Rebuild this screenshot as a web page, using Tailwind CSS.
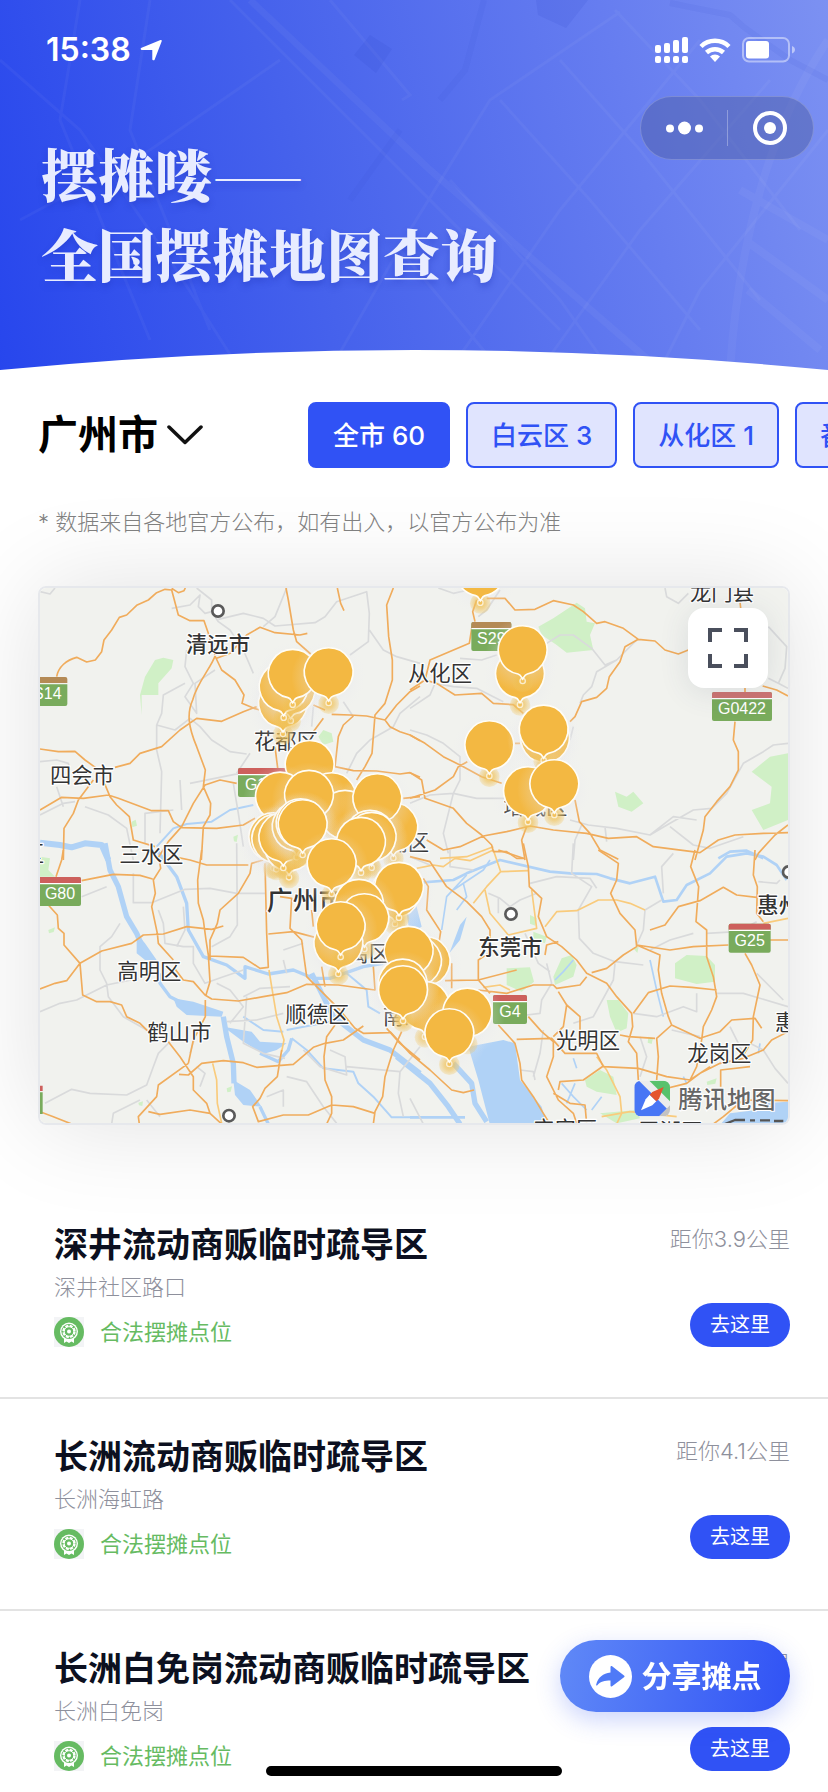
<!DOCTYPE html>
<html lang="zh-CN">
<head>
    <meta charset="UTF-8">
    <meta name="viewport" content="width=device-width, initial-scale=1.0">
    <script src="https://cdn.jsdelivr.net/npm/@tailwindcss/browser@4"></script>
    <title>全国摆摊地图查询</title>
</head>
<body class="bg-white text-[#0c1020] overflow-x-hidden [font-family:Inter,'Noto_Sans_CJK_SC',sans-serif]">

    <!-- shared icons -->
    <svg class="hidden">
        <symbol id="badge" viewBox="0 0 30 30">
            <rect width="30" height="30" fill="#f3f4f6"/>
            <circle cx="15" cy="15" r="15" fill="#66bb62"/>
            <path d="M10 20v6l2.500-1.500L15 26l2.500-1.500L20 26v-6" fill="#fff"/>
            <circle cx="15" cy="14.500" r="9" fill="#fff"/>
            <circle cx="15" cy="14.500" r="7.600" fill="#66bb62"/>
            <circle cx="15" cy="14.500" r="5.600" fill="none" stroke="#fff" stroke-width="2.200" stroke-dasharray="3 1.400"/>
            <circle cx="15" cy="14.500" r="4.800" fill="none" stroke="#fff" stroke-width="1"/>
            <circle cx="15" cy="14.500" r="2" fill="#fff"/>
        </symbol>
    </svg>

    <header class="relative bg-linear-[76deg,#2746ed_0%,#4662ec_38%,#667df0_75%,#7c91f2_100%] text-white">
        <!-- faint street grid -->
        <svg class="absolute inset-0 w-full h-full" viewBox="0 0 828 370" preserveAspectRatio="xMidYMid slice" fill="none" stroke="#fff" stroke-opacity=".04" stroke-width="3" aria-hidden="true">
            <path d="M230 0L340 110 560 330M330 0L410 95 402 100M620 12L490 100 410 230 330 370M700 40L560 210 450 370M770 80L640 230 540 370M828 130L700 290 660 370M615 10L700 100 800 230M560 60L640 150 760 300M500 100L590 200 700 330M450 180L560 300 610 370M400 250L500 370M0 60L80 130 170 260 240 370M80 0L60 120 150 340M150 0L130 130 210 330M20 220L150 150 280 60"/>
            <path d="M828 40C780 110 740 220 730 370M828 240L740 190M828 300L745 240M820 350L748 290" stroke-width="8"/>
            <path d="M250 0L430 170 660 370" stroke-width="7"/>
            <g fill="#2d48c8" fill-opacity=".13" stroke="none">
                <path d="M536 0h52l-22 28-28-13zM370 35l22 14-16 24-22-18z"/>
            </g>
            <path d="M670 3L730 15 745 28 790 60 828 80M484 0L465 70 440 100M400 130L350 200" stroke="#2d48c8" stroke-opacity=".08" stroke-width="6"/>
        </svg>

        <div class="relative h-24 pt-1 pl-[46px] pr-[33px] flex items-center justify-between">
            <div class="flex items-center gap-2">
                <span class="text-[32px] font-semibold leading-10">15:38</span>
                <svg class="w-6 h-6" viewBox="0 0 24 24" fill="#fff"><path d="M21.500 2c.8-.4 1.600.4 1.200 1.200l-7.100 18.500c-.4 1-2.300.8-2.300-.4V12H3c-1.600 0-1.900-1.700-.4-2.300z"/></svg>
            </div>
            <div class="flex items-center gap-2.5">
                <svg class="w-[36px] h-[28px]" viewBox="0 0 36 28" fill="#fff">
                    <rect x="2" y="9" width="6" height="8" rx="2"/><rect x="11" y="7" width="6" height="10" rx="2"/><rect x="20" y="4" width="6" height="13" rx="2"/><rect x="29" y="1" width="6" height="16" rx="2"/>
                    <rect x="2" y="20" width="6" height="7" rx="2"/><rect x="11" y="20" width="6" height="7" rx="2"/><rect x="20" y="20" width="6" height="7" rx="2"/><rect x="29" y="20" width="6" height="7" rx="2"/>
                </svg>
                <svg class="w-8 h-6" viewBox="0 0 32 24" fill="none" stroke="#fff">
                    <path d="M2 8.500a20 20 0 0 1 28 0" stroke-width="4.500"/>
                    <path d="M7.500 14.500a12.500 12.500 0 0 1 17 0" stroke-width="4.500"/>
                    <path d="M16 24l-5-5.500a7.500 7.500 0 0 1 10 0z" fill="#fff" stroke="none"/>
                </svg>
                <svg class="w-[54px] h-[26px]" viewBox="0 0 54 26">
                    <rect x="2" y="1" width="46" height="23.500" rx="6" fill="none" stroke="#fff" stroke-opacity=".45" stroke-width="2"/>
                    <rect x="5" y="4" width="23" height="17.500" rx="3" fill="#fff"/>
                    <path d="M51 9c4 1.500 4 6 0 7.500z" fill="#fff" fill-opacity=".5"/>
                </svg>
            </div>
        </div>

        <div class="absolute top-24 right-[14px] w-[174px] h-16 rounded-full bg-[#4c5aa0]/45 border border-white/20 flex items-center">
            <button type="button" aria-label="更多" class="flex-1 flex justify-center">
                <svg class="w-10 h-4" viewBox="0 0 40 16" fill="#fff"><circle cx="6" cy="8.500" r="4"/><circle cx="20.500" cy="8" r="6.500"/><circle cx="35" cy="8.500" r="4"/></svg>
            </button>
            <span class="w-px h-9 bg-white/30"></span>
            <button type="button" aria-label="关闭" class="flex-1 flex justify-center">
                <svg class="w-[34px] h-[34px]" viewBox="0 0 34 34"><circle cx="17" cy="17" r="15" fill="none" stroke="#fff" stroke-width="4"/><circle cx="17" cy="17" r="6" fill="#fff"/></svg>
            </button>
        </div>

        <h1 class="relative pt-9 pb-[58px] pl-[41px] text-[57px] leading-[80px] font-black text-[#e8ecff] text-shadow-[0_4px_6px_rgb(30_50_180_/_0.35)] [font-family:'Noto_Serif_CJK_SC','Noto_Sans_CJK_SC',serif]">
            摆摊喽<span class="text-[46px] leading-none font-medium [font-family:'Noto_Sans_CJK_SC',sans-serif]">——</span><br>全国摆摊地图查询
        </h1>
        <svg class="relative block w-full h-5" viewBox="0 0 828 20" preserveAspectRatio="none"><path d="M0 20Q414-20 828 20v1H0z" fill="#fff"/></svg>
    </header>

    <main>
        <div class="flex pt-8">
            <div class="relative w-[308px] shrink-0 pl-[38px] flex items-center">
                <label for="city" class="sr-only">城市</label>
                <select id="city" name="city" class="appearance-none w-40 h-[66px] bg-transparent text-[40px] font-bold text-black">
                    <option>广州市</option>
                    <option>深圳市</option>
                    <option>佛山市</option>
                </select>
                <svg class="absolute left-[167px] w-9 h-5 pointer-events-none" viewBox="0 0 36 20" fill="none" stroke="#111" stroke-width="3.500" stroke-linecap="round" stroke-linejoin="round"><path d="M2 2l16 15.500L34 2"/></svg>
            </div>
            <nav class="flex gap-4 overflow-hidden text-[26px] font-medium whitespace-nowrap">
                <button type="button" class="h-[66px] px-[23px] shrink-0 rounded-lg border-2 border-[#3052f5] bg-[#3052f5] text-white">全市 60</button>
                <button type="button" class="h-[66px] px-[23px] shrink-0 rounded-lg border-2 border-[#3052f5] bg-[#e0e4fe] text-[#3052f5]">白云区 3</button>
                <button type="button" class="h-[66px] px-[23px] shrink-0 rounded-lg border-2 border-[#3052f5] bg-[#e0e4fe] text-[#3052f5]">从化区 1</button>
                <button type="button" class="h-[66px] px-[23px] shrink-0 rounded-lg border-2 border-[#3052f5] bg-[#e0e4fe] text-[#3052f5]">番禺区 8</button>
            </nav>
        </div>

        <p class="relative z-10 mt-[38px] px-[38px] text-[22px] leading-8 font-light text-[#808080]">* 数据来自各地官方公布，如有出入，以官方公布为准</p>

        <section class="relative mx-[38px] mt-12 border-2 border-[#e6e8ec] rounded-lg shadow-[0_0_100px_rgb(0_0_0_/_0.12)]">
            <svg class="block w-full rounded-md bg-[#f1f2ee]" viewBox="0 0 2244 1605" role="img" aria-label="摊点地图">
                <defs>
                    <radialGradient id="halo"><stop offset="0" stop-color="#f3cb66"/><stop offset=".5" stop-color="#f0bf50" stop-opacity=".6"/><stop offset="1" stop-color="#f0c45c" stop-opacity=".25"/></radialGradient>
                    <radialGradient id="shade"><stop offset=".6" stop-color="#e6e6ec" stop-opacity=".25"/><stop offset="1" stop-color="#eeeef2" stop-opacity="0"/></radialGradient>
                    <g id="pin">
                        <circle cy="14" r="112" fill="url(#shade)"/>
                        <circle cy="94" r="31" fill="url(#halo)"/>
                        <circle cy="92" r="8" fill="#f3c25c" stroke="#fff" stroke-opacity=".7" stroke-width="4"/>
                        <path d="M-14 71A73 73 0 1 1 14 71C6 73 4 80 0 86-4 80-6 73-14 71z" fill="#f3b842" stroke="#fffdf6" stroke-width="5"/>
                    </g>
                    <g id="town"><circle r="17" fill="#fff" stroke="#5a5a5a" stroke-width="8"/></g>
                </defs>

                <!-- parks -->
                <g fill="#d0f0c6">
                    <path transform="translate(-30 -24)" d="M345 290L375 240 400 233 430 240 425 265 385 310 385 345 335 345 335 405 330 345zM880 450l25 10 5 25-30 10-15-25zM305 725l12-6 4 18-14 5zM610 770l14-6-4 22-8-2z"/>
                    <path transform="translate(1110 -24)" d="M385 140L430 115 500 68 525 85 530 125 555 130 540 165 550 210 470 218 440 195 395 165zM615 635L650 650 670 635 700 670 665 695 625 680zM1134 520L1080 530 1025 575 1085 620 1080 670 1025 690 1060 750 1134 720z"/>
                    <path transform="translate(-30 786)" d="M30 20L60 25 55 60 75 80 30 80zM55 240l20-8-4 14-14 4zM590 715l16-6-4 16-10 2zM325 758l14-4-2 14-10-2z"/>
                    <path transform="translate(1110 786)" d="M290 355L360 352 372 395 335 425 290 405zM795 340L830 315 890 318 915 345 915 395 860 402 795 385zM590 450L625 450 655 490 650 535 620 548 600 500zM525 690L570 660 610 680 620 735 560 725 530 710zM430 380L455 325 485 315 500 345 490 380 435 405zM570 790L680 780 690 805 620 820zM370 245L410 260 405 280 370 270zM360 195l20 10-4 22-16-6zM890 695l30-10-4 16-24 4zM715 560l14 4-4 18-12-4zM670 295l16-4-4 18z"/>
                </g>

                <!-- water -->
                <g fill="none" stroke="#b0d2f6" stroke-width="8" stroke-linejoin="round">
                    <g transform="translate(-30 -24)">
                        <path stroke-width="18" d="M30 788L90 795 125 802 165 790 215 795 235 840"/>
                        <path stroke-width="6" d="M380 800L430 745 470 732 545 725 600 690 670 675"/>
                    </g>
                    <path transform="translate(1110 -24)" d="M925 835L960 815 1010 812 1060 835"/>
                    <g transform="translate(-30 786)">
                        <path stroke-width="16" d="M225-20L240 60 265 110 290 200 320 250 345 310M580 500L590 560 610 640 612 700M845 370L880 440 910 500 1000 570 1080 600 1170 670"/>
                        <path stroke-width="10" d="M380 0L440 80 470 160 475 240 520 320 590 345 645 385 645 350 715 372 790 360 850 385 900 385 1000 350 1060 340M690 610L745 635 775 600 785 565M690 770L715 822M388 370L390 400 420 440 450 455"/>
                        <path stroke-width="6" d="M785 565L830 600 880 655 970 665 985 700 1030 740 1085 802 1170 802M950 370L1010 420 1015 470 1050 490M770 540L900 515M640 500L700 540 760 545"/>
                        <path fill="#b0d2f6" stroke="none" d="M320 250L345 280 380 330 345 330 320 310zM430 445L490 455 580 485 575 500 470 495 440 470zM610 690L660 720 695 770 640 765 615 735zM580 530L665 545 690 575 770 580 740 600 700 612 640 575z"/>
                    </g>
                    <g transform="translate(1110 786)">
                        <path d="M0 100L130 90 170 70 270 30 420 65 480 70 560 72 600 85 660 100 735 80 760 155 800 150 830 105 900 70 950 20 1010 10 1060 20 1100 45 1130 90"/>
                        <path stroke-width="5" d="M170 75L110 140 95 240M160 100L170 140 140 180M240 30L220 60 130 120M435 390L460 365 490 330M455 700L490 740 530 780M495 700L470 760M720 330L740 420 760 500M545 780L575 740M490 625L500 655M820 680L830 700M1050 580L1045 610"/>
                        <path stroke-width="16" d="M130 640L185 700 195 760 230 815M-40 620L60 700 115 770 150 822"/>
                        <path d="M0 802H165"/>
                        <path fill="#b0d2f6" stroke="none" d="M170 200L150 225 118 310 150 270zM175 590L280 570 315 580 330 690 395 770 410 825H240L205 690zM1134 755L1060 760 1040 780 960 790 930 825H1134zM-20 140L20 170 35 230 0 250z"/>
                    </g>
                </g>

                <!-- minor roads -->
                <g fill="none" stroke="#d9dadb" stroke-width="5" stroke-linejoin="round">
                    <path transform="translate(-30 -24)" d="M425 85L480 75 510 45 505 80 525 100 545 95 565 125 600 150 640 210 670 280M500 24L545 60 545 95M565 118L640 100 700 115 735 138 855 128 885 110 920 65 1010 35 1018 100 1015 185 960 225M1018 150L1060 210 1100 230 1170 250M470 210L465 260 490 310 465 350 500 400 495 310 555 270M465 310L400 345 395 400 380 435 380 510 395 575 390 760M380 435L435 450 480 415 510 440 545 480 600 515 650 522M480 610L640 578M30 545L80 540 115 550 120 570M30 705L100 670 135 665M80 620L100 680M165 680L235 705 290 745 310 840M770 24L735 110 700 140M610 610L625 700 640 800M345 790L345 700 430 690M450 600L455 690M30 35L60 42 75 24M1170 350L1110 400 1090 440 1020 480 980 520 950 580M660 520L620 580M850 380L845 440M940 365L970 410"/>
                    <path transform="translate(1110 -24)" d="M85 24L130 40 175 30M270 30L230 90 205 110M410 190L450 165 490 165 545 205 585 255 620 240 560 275 545 320 520 345 510 370M765 24L770 50 805 70 835 40M1075 140L1130 200 1125 265 1105 310 1134 325M1075 295L1105 310M0 385L60 345 75 310 130 320 200 325 250 350 280 365M150 235L215 240 260 225M0 450L50 465 100 490 150 530 150 600 130 640 100 760 115 820M0 670L60 645 130 640 200 655 290 655M480 720L535 735 620 745 720 765 780 730 850 690 905 685 950 640 1000 550 1060 515 1090 495 1134 490M515 735L495 780 490 840M720 765L790 710 860 720M780 740L850 795 900 805 1000 770M585 740L590 785M480 480L490 440M620 240L680 180"/>
                    <path transform="translate(-30 786)" d="M155 140L230 110M310 70L310 158 365 158 465 118 540 115 620 130 705 130M620-20L622 225 600 260 545 290M385 180L400 220 405 280 460 290 490 290 490 340 525 400 580 380 640 360M460 170L465 240 440 290M30 485L90 460 140 450 230 405 325 385M270 220L245 260 210 290 210 360 230 400 235 440 280 500 350 540M650 440L640 580 700 610 765 625M590 515L680 510 760 490M640 440L690 415 780 410M45 760L125 718 180 730 290 735 350 705 370 650 385 610 420 575M245 822L250 790 330 750M350 750L390 800M495 560L480 610M820 600L870 650 950 675 945 620 900 600M950 650L1110 665 1105 730 1120 800M770 680L830 695 880 770 920 820M710 740L760 720 760 770M560 400L600 420 640 470 600 520M760 330L770 370M500 650L525 670 510 710M1170 590L1110 665M760 300L820 280"/>
                    <path transform="translate(1110 786)" d="M490-20L485 70 545 110 505 180 508 265 550 310 615 335 700 345M360 100L440 80 540 85 560 115M760 130L755 50 790 10M755 150L705 180 700 240 680 285M615 340L610 390 550 500 490 520M235 130L270 145 300 170 330 150 380 130M265 145L265 190M410 340L425 400 395 450 390 490 350 495M400 540L390 610 370 680M890 250L980 245 1040 215M850 250L780 270 720 300M920 430L1000 430 1134 470M1040 370L1120 450M1020 580L1060 600 1095 655 1134 700M670 490L740 500 820 470 860 485 860 430M785 540L870 560M1000 610L960 530M120 0V50L190 60M330 660L370 665 375 690M0 20L60 45M690 560L710 620 690 680M1045 95L1100 100 1110 90M345 250L385 340 420 365M0 745L40 822"/>
                </g>

                <!-- provincial roads -->
                <g fill="none" stroke="#f9cb7c" stroke-width="5" stroke-linejoin="round">
                    <path transform="translate(1110 -24)" d="M90 835L170 830 250 800"/>
                    <path transform="translate(-30 786)" d="M717 360L725 410 740 500 762 570 755 605M548 640L560 690 562 760 575 820"/>
                    <path transform="translate(1110 786)" d="M20 55L70 45 100 50 135 25 180 32 250 0 272 65 355 62M272 65L230 110 190 160M225 120L240 190 295 255 380 235 365 120M405 230L440 185 500 182 565 150 620 150 660 160 705 180M220 412L270 405 300 420M560 620L590 660 630 740 635 790 620 822M1060 220L1134 205M575 800L660 785 800 800"/>
                </g>

                <!-- highways -->
                <g fill="none" stroke="#f0ac5c" stroke-width="5" stroke-linejoin="round">
                    <path transform="translate(-30 -24)" d="M80 290C85 260 110 240 140 232L170 246 196 240 215 215 222 180 245 150 268 112 290 105 320 76 355 60 380 38 405 28 425 30 445 105 480 122 522 122 535 160 555 225M425 25L445 38 462 32 466 24M555 228C545 260 500 310 488 360 470 400 475 440 500 500L526 570 520 620 542 670 540 705 520 740 514 840M555 228L575 270 615 300 642 345 636 370 672 385 690 390M30 507L85 515 135 514 165 540 200 565M255 562L300 550 330 520 395 500 450 450 500 415 575 424 640 395 680 380M560 235L600 220 650 165 690 142 735 158 810 165 832 160M768 24L775 60 790 150 800 185 842 222M922 24L932 70 942 92M1090 24L1070 75 1076 170 1087 240 1087 300 1065 370 1035 405 1026 520 1005 560 980 600M905 403L960 405 1010 408 1065 420 1100 375 1140 335 1170 318M1065 420L1080 440 1110 455 1140 465 1170 482M970 408L940 435 925 470 915 560M850 375L885 390M880 415L850 455M30 690L95 652 160 655 235 645 265 655 365 692 415 692 430 725 455 743 560 745 640 735 675 715M190 600L145 660 130 700 102 745 100 840M215 590L240 650 260 675 298 710 310 780 375 800M735 500L745 580M620 610L570 600 525 615 490 670 455 740 415 785 380 840M915 560L970 572 1040 573 1110 582 1140 578 1170 592M1120 655L1170 650"/>
                    <path transform="translate(1110 -24)" d="M230 55L285 55 315 90 375 88 430 62 490 75 520 95 560 130 585 125 640 145 685 178 735 183 765 210 805 222 835 210M200 60L188 95 195 125M685 178L645 200 630 245 598 290 590 325 560 352 515 365 495 410 480 425M186 140L178 190 60 240 45 300 0 330M45 300L80 310 135 345 215 340 250 370 310 374 340 400M0 465L45 490 100 530 160 560 215 590 275 610M172 545L145 560 130 590 75 630 0 655M0 578L35 600 45 655 130 685 170 730 215 765 245 795 250 815 290 815 320 835 345 835M50 780L100 810 150 800 220 768 290 755 360 738 430 750 530 760 595 775 680 770 730 800 870 818 925 780 975 765 1060 760 1134 758M350 740L335 780 345 840M495 660L508 725 540 760 570 810 625 838M1134 735L1095 765 1045 820 1035 840M975 425L970 480 985 515 985 570 960 620 920 665 885 710 880 750 855 840M1058 318L1100 330 1134 348M990 65L992 84M1005 322V338M315 490H330"/>
                    <path transform="translate(-30 786)" d="M100 0L95 30 78 80M155 92L250 73 330 76 368 87M388 30L392 55 370 90 376 130 365 170 382 250 385 280 430 330M515 0L503 90 505 160 520 210 528 270 535 315 540 395 528 435M430 20L480 30 530 45 655 45M700 30L665 40 660 70 625 130 570 180 562 220 540 270 540 330M580 228L545 238 470 230 400 252 340 255 305 280 215 303 150 340 110 392 75 400 30 417M55 165L82 195 85 235 102 250 102 285 150 340 158 435 200 455 240 455 275 465 290 500 330 520 355 545M540 318L640 322 690 355 715 352 710 250 705 40M715 252L790 245 855 262M750 140L785 145 780 235 815 270 830 380 860 410 925 475 975 535M845 180L850 230M430 350L460 390 490 395 525 435 545 447 625 453 700 440 770 428 830 403 925 405 1035 420 1030 350M526 450L526 500 490 570 475 640M415 575L450 620 470 650 490 680 490 720 530 760 540 790 575 822M328 822L325 800 380 740 385 705 475 640M447 673L475 675 515 640 580 632 640 638 680 652 790 643 850 592 885 580 940 570 1000 528M975 535L1000 550 1080 548M875 350L885 410M915 525L890 560 882 620 885 690 905 740 905 790 890 822M755 600L742 680 705 715 690 745 668 770 685 815 760 795 835 795 905 765 970 770 1035 790M355 785L390 793 480 780 540 790M1115 545L1090 600 1065 680 1058 740 1035 785 1030 822M1070 535L1110 580 1170 630M30 785L70 800 125 822"/>
                    <path transform="translate(1110 786)" d="M0 20L60 35 110 110 170 155 215 200 240 240 240 300M40 85L55 110 50 180 92 245 85 290M340-20L355 50 358 110 395 145 385 200 410 260 455 290 500 330 530 370 590 400 620 440 665 490 668 530 655 575 680 610 685 690M265 0L340 25M565 0L625 40 620 90 602 130 630 190 675 240 680 290 640 315 590 355 545 368M855 0L842 50 866 110 858 215 890 240 890 320 910 380 920 440 905 480 880 530 875 570M1035 0L1030 75 1042 110 1040 190 1060 215M720 240L765 225 805 170 870 152 940 112 980 135 1040 142M680 285L780 300 850 290 955 285M1080 270L1134 270M680 285L750 315 745 360 755 430 775 500 785 525 740 565 745 620 740 690M235 310L205 330 205 390 240 430M105 392L205 390 320 360M205 420L290 430 370 405 430 405 440 415 510 405 530 380M445 275L410 285 405 315M445 425L470 465 460 530 430 560M470 465L510 500 510 540M630 555L655 560 735 565M785 525L870 565 930 545 965 510 1035 505 1055 535M1005 310L1025 345 1050 405 1030 500 1028 570 1000 615M920 420L845 412 780 408 715 428 670 490M265 525L315 580 330 640 335 690 370 740 400 790 420 822M355 500L395 545 430 575 430 620 410 680 445 750 490 790 500 820M320 568L425 565 465 610 560 610 580 650 685 655 770 680 840 690 900 650M445 720L450 695 520 690 580 648M430 730L480 760 525 765 530 822M1134 545L1085 570 1060 600 1000 625 930 640 870 670 830 700 750 720M875 570L860 650 840 690M1020 650L932 660 932 710M-60 545L0 610 60 660 125 720 160 728 192 720M1134 752L1000 750 940 800 910 822M125 340V415"/>
                </g>

                <!-- road shields -->
                <g font-family="'Liberation Sans', sans-serif" font-size="48" fill="#fff" text-anchor="middle">
                    <g transform="translate(-30 -24)">
                        <path d="M0 313H112V372q0 6-6 6H0z" fill="#79ab5c"/><path d="M0 291H106q6 0 6 6V309H0z" fill="#b48a55"/><text x="52" y="357">S14</text>
                        <rect x="624" y="564" width="144" height="87" rx="6" fill="#79ab5c"/><path d="M624 582V570q0-6 6-6H762q6 0 6 6V582z" fill="#cd605c"/><path d="M624 584H768" stroke="#fff" stroke-width="4"/><text x="690" y="630">G15</text>
                    </g>
                    <g transform="translate(1110 -24)">
                        <rect x="184" y="126" width="120" height="87" rx="6" fill="#79ab5c"/><path d="M184 144V132q0-6 6-6H298q6 0 6 6V144z" fill="#b48a55"/><path d="M184 146H304" stroke="#fff" stroke-width="4"/><text x="244" y="192">S29</text>
                        <rect x="906" y="336" width="180" height="87" rx="6" fill="#79ab5c"/><path d="M906 354V342q0-6 6-6H1080q6 0 6 6V354z" fill="#cd7472"/><path d="M906 356H1086" stroke="#fff" stroke-width="4"/><text x="996" y="402">G0422</text>
                    </g>
                    <g transform="translate(-30 786)">
                        <path d="M0 81H147q6 0 6 6V162q0 6-6 6H0z" fill="#79ab5c"/><path d="M0 81H147q6 0 6 6V99H0z" fill="#cd605c"/><path d="M0 101H153" stroke="#fff" stroke-width="4"/><text x="90" y="147">G80</text>
                        <path d="M30 727H38V792H30z" fill="#79ab5c"/><path d="M30 707H38V723H30z" fill="#cd605c"/>
                    </g>
                    <g transform="translate(1110 786)">
                        <rect x="956" y="221" width="126" height="87" rx="6" fill="#79ab5c"/><path d="M956 239V227q0-6 6-6H1076q6 0 6 6V239z" fill="#cd605c"/><path d="M956 241H1082" stroke="#fff" stroke-width="4"/><text x="1019" y="287">G25</text>
                        <rect x="249" y="435" width="102" height="87" rx="6" fill="#79ab5c"/><path d="M249 453V441q0-6 6-6H345q6 0 6 6V453z" fill="#cd605c"/><path d="M249 455H351" stroke="#fff" stroke-width="4"/><text x="300" y="501">G4</text>
                    </g>
                </g>

                <!-- place names -->
                <use href="#town" x="534" y="69"/><use href="#town" x="567" y="1583"/><use href="#town" x="1413" y="978"/><use href="#town" x="2246" y="852"/>
                <g font-family="'Noto Sans CJK SC', sans-serif" font-size="64" fill="#333" stroke="#fff" stroke-width="7" stroke-linejoin="round" paint-order="stroke">
                    <g transform="translate(-30 -24)">
                        <text x="468" y="215" font-weight="500">清远市</text>
                        <text x="60" y="610">四会市</text>
                        <text x="672" y="507">花都区</text>
                        <text x="268" y="845">三水区</text>
                        <text x="42" y="844" text-anchor="end">要区</text>
                    </g>
                    <g transform="translate(1110 -24)">
                        <text x="-6" y="304">从化区</text>
                        <text x="840" y="61">龙门县</text>
                        <text x="280" y="701">增城区</text>
                        <text x="-135" y="809">黄埔区</text>
                    </g>
                    <g transform="translate(-30 786)">
                        <text x="262" y="387">高明区</text>
                        <text x="352" y="571">鹤山市</text>
                        <text x="766" y="516">顺德区</text>
                        <text x="888" y="334">番禺区</text>
                        <text x="1058" y="522">南沙区</text>
                        <text x="710" y="179" font-size="78" font-weight="500">广州市</text>
                    </g>
                    <g transform="translate(1110 786)">
                        <text x="205" y="316" font-weight="500">东莞市</text>
                        <text x="438" y="594">光明区</text>
                        <text x="832" y="632">龙岗区</text>
                        <text x="1042" y="190" font-weight="500">惠州市</text>
                        <text x="1095" y="540">惠阳区</text>
                        <text x="370" y="861">宝安区</text>
                        <text x="685" y="867">罗湖区</text>
                        <path d="M940 824L975 810 1005 810M1020 811H1035M1050 811H1080M1092 813H1120" fill="none" stroke="#555" stroke-width="7"/>
                    </g>
                </g>

                <!-- stall pins -->
                <g transform="translate(-30 -24)">
                    <use href="#pin" x="759" y="370"/><use href="#pin" x="782" y="330"/><use href="#pin" x="761" y="321"/><use href="#pin" x="788" y="282"/><use href="#pin" x="896" y="277"/>
                </g>
                <g transform="translate(1110 -24)">
                    <use href="#pin" x="211" y="-24"/><use href="#pin" x="330" y="282"/><use href="#pin" x="338" y="211"/><use href="#pin" x="238" y="496"/><use href="#pin" x="405" y="475"/><use href="#pin" x="401" y="449"/><use href="#pin" x="354" y="634"/><use href="#pin" x="433" y="613"/>
                </g>
                <g transform="translate(585 426)">
                    <use href="#pin" x="224" y="105"/><use href="#pin" x="290" y="202"/><use href="#pin" x="135" y="200"/><use href="#pin" x="330" y="255"/><use href="#pin" x="222" y="195"/><use href="#pin" x="475" y="292"/><use href="#pin" x="427" y="205"/>
                    <use href="#pin" x="115" y="322"/><use href="#pin" x="124" y="326"/><use href="#pin" x="162" y="350"/><use href="#pin" x="145" y="322"/><use href="#pin" x="185" y="290"/><use href="#pin" x="197" y="280"/><use href="#pin" x="203" y="283"/>
                    <use href="#pin" x="405" y="315"/><use href="#pin" x="410" y="321"/><use href="#pin" x="378" y="336"/><use href="#pin" x="290" y="400"/>
                    <use href="#pin" x="480" y="490"/><use href="#pin" x="492" y="471"/><use href="#pin" x="372" y="522"/><use href="#pin" x="388" y="565"/><use href="#pin" x="310" y="640"/><use href="#pin" x="317" y="589"/>
                    <use href="#pin" x="572" y="694"/><use href="#pin" x="546" y="694"/><use href="#pin" x="521" y="663"/><use href="#pin" x="570" y="828"/><use href="#pin" x="503" y="761"/><use href="#pin" x="504" y="781"/><use href="#pin" x="697" y="848"/><use href="#pin" x="643" y="910"/>
                </g>

                <!-- map provider -->
                <g transform="translate(1783 1478)">
                    <clipPath id="tile"><rect width="107" height="107" rx="20"/></clipPath>
                    <g clip-path="url(#tile)">
                        <path d="M0 0H107V107H0z" fill="#ececec"/>
                        <path d="M0 0H14L98 84 75 107H0z" fill="#4876f5"/>
                        <path d="M45 0H107V62z" fill="#58c26c"/>
                        <path d="M107 74V107H74z" fill="#c2c2c2"/>
                        <path d="M20 89L34 56 46 42 66 62 54 74z" fill="#fff"/>
                        <path d="M88 19L54 34 46 42 66 62 74 54z" fill="#e5542d"/>
                    </g>
                    <text x="132" y="83" font-family="'Noto Sans CJK SC', sans-serif" font-size="73" font-weight="500" fill="#666" stroke="#fff" stroke-width="6" paint-order="stroke">腾讯地图</text>
                </g>
            </svg>
            <button type="button" aria-label="全屏" class="absolute top-5 right-5 w-20 h-20 rounded-2xl bg-white shadow-[0_4px_30px_rgb(60_70_110_/_0.12)] flex items-center justify-center">
                <svg class="w-10 h-10" viewBox="0 0 40 40" fill="none" stroke="#4a4f5c" stroke-width="4"><path d="M2 14V2H14M26 2H38V14M38 26V38H26M14 38H2V26"/></svg>
            </button>
        </section>

        <ul class="relative mt-[62px]">
            <li class="flex justify-between pl-[54px] pr-[38px] h-[212px] border-b-2 border-[#e3e3e3]">
                <div class="pt-9">
                    <h2 class="text-[34px] leading-[44px] font-bold">深井流动商贩临时疏导区</h2>
                    <p class="mt-1 text-[22px] leading-8 font-light text-[#8e909c]">深井社区路口</p>
                    <p class="mt-3 flex items-center gap-4 text-[22px] leading-[34px] text-[#66bb62]"><svg class="w-[30px] h-[30px]"><use href="#badge"/></svg>合法摆摊点位</p>
                </div>
                <div class="pt-9 flex flex-col items-end">
                    <span class="text-[22px] leading-8 font-light text-[#8e909c]">距你3.9公里</span>
                    <button type="button" class="mt-12 w-[100px] h-11 rounded-full bg-[#3052f5] text-white text-[20px]">去这里</button>
                </div>
            </li>
            <li class="flex justify-between pl-[54px] pr-[38px] h-[212px] border-b-2 border-[#e3e3e3]">
                <div class="pt-9">
                    <h2 class="text-[34px] leading-[44px] font-bold">长洲流动商贩临时疏导区</h2>
                    <p class="mt-1 text-[22px] leading-8 font-light text-[#8e909c]">长洲海虹路</p>
                    <p class="mt-3 flex items-center gap-4 text-[22px] leading-[34px] text-[#66bb62]"><svg class="w-[30px] h-[30px]"><use href="#badge"/></svg>合法摆摊点位</p>
                </div>
                <div class="pt-9 flex flex-col items-end">
                    <span class="text-[22px] leading-8 font-light text-[#8e909c]">距你4.1公里</span>
                    <button type="button" class="mt-12 w-[100px] h-11 rounded-full bg-[#3052f5] text-white text-[20px]">去这里</button>
                </div>
            </li>
            <li class="flex justify-between pl-[54px] pr-[38px] h-[180px]">
                <div class="pt-9">
                    <h2 class="text-[34px] leading-[44px] font-bold">长洲白免岗流动商贩临时疏导区</h2>
                    <p class="mt-1 text-[22px] leading-8 font-light text-[#8e909c]">长洲白免岗</p>
                    <p class="mt-3 flex items-center gap-4 text-[22px] leading-[34px] text-[#66bb62]"><svg class="w-[30px] h-[30px]"><use href="#badge"/></svg>合法摆摊点位</p>
                </div>
                <div class="pt-9 flex flex-col items-end">
                    <span class="text-[22px] leading-8 font-light text-[#8e909c]">距你4.2公里</span>
                    <button type="button" class="mt-12 w-[100px] h-11 rounded-full bg-[#3052f5] text-white text-[20px]">去这里</button>
                </div>
            </li>
        </ul>
    </main>

    <button type="button" class="fixed right-[38px] bottom-20 w-[230px] h-[72px] rounded-full bg-linear-[100deg,#6089f7,#3052f5] shadow-[0_8px_24px_rgb(48_82_245_/_0.25)] flex items-center justify-center gap-2.5 text-white text-[30px] font-bold">
        <svg class="w-[43px] h-[43px]" viewBox="0 0 43 43"><circle cx="21.500" cy="21.500" r="21.500" fill="#fff"/><path d="M21.500 12c0-1 .8-1.300 1.600-.7L35 20.500c.8.600.8 1.200 0 1.800l-11.900 9c-.8.600-1.600.3-1.600-.7v-5c-6 0-10 1-13 4.500-.8.900-1.600.5-1.300-.6C9 22.500 14 18.200 21.500 17.500z" fill="#4f7af7"/></svg>
        分享摊点
    </button>
    <div class="fixed bottom-4 left-1/2 -translate-x-1/2 w-[296px] h-2.5 rounded-full bg-black"></div>
</body>
</html>
